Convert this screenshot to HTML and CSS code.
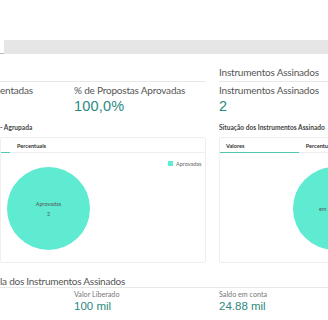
FILE: index.html
```html
<!DOCTYPE html>
<html>
<head>
<meta charset="utf-8">
<link rel="stylesheet" href="styles.css">
</head>
<body>
<div class="top"></div>
<div class="searchrow"><div class="stub"></div><div class="search"></div></div>
<div class="grid">
  <div class="col">
    <div class="sheethead"></div>
    <div class="kpis">
      <div class="kpi k1"><div class="klabel">entadas</div></div>
      <div class="kpi"><div class="klabel">% de Propostas Aprovadas</div><div class="kval">100,0%</div></div>
    </div>
    <div class="ctitle">- Agrupada</div>
    <div class="card">
      <div class="tabs">
        <div class="tab tab-left active"></div>
        <div class="tab">Percentuais</div>
      </div>
      <div class="chart">
        <div class="pie left-pie"><span>Aprovadas</span><span>2</span></div>
        <div class="legend"><i></i>Aprovadas</div>
      </div>
    </div>
  </div>
  <div class="col">
    <div class="sheethead"><span>Instrumentos Assinados</span></div>
    <div class="kpis">
      <div class="kpi"><div class="klabel">Instrumentos Assinados</div><div class="kval">2</div></div>
    </div>
    <div class="ctitle">Situação dos Instrumentos Assinado</div>
    <div class="card card-r">
      <div class="tabs">
        <div class="tab tab-v active">Valores</div>
        <div class="tab">Percentu</div>
      </div>
      <div class="chart chart-r">
        <div class="pie right-pie"><span>em</span></div>
      </div>
    </div>
  </div>
</div>
<div class="bottom">
  <div class="bhead">la dos Instrumentos Assinados</div>
  <div class="bkpis">
    <div class="bk b0"></div>
    <div class="bk b1"><div class="blabel">Valor Liberado</div><div class="bval">100 mil</div></div>
    <div class="bk b2"><div class="blabel">Saldo em conta</div><div class="bval">24.88 mil</div></div>
  </div>
</div>
</body>
</html>
```
FILE: styles.css
```css
html, body { margin: 0; padding: 0; }
body {
  width: 328px; height: 320px; overflow: hidden; background: #fff;
  font-family: Lato, "Liberation Sans", sans-serif; color: #555;
}
.top { height: 40px; }
.searchrow { display: flex; height: 14px; }
.stub { width: 4px; border-bottom: 1px solid #bbb; box-sizing: border-box; }
.search { flex: 1; background: #e6e6e6; }
.grid { display: grid; grid-template-columns: 206px 109px; column-gap: 13px; }
.col { display: flex; flex-direction: column; min-width: 0; }
.sheethead {
  height: 15px; padding-top: 12px; border-bottom: 1px solid #e8e8e8;
  font-size: 10px; letter-spacing: -0.2px; line-height: 13px; white-space: nowrap;
}
.kpis { display: flex; height: 39px; }
.kpi { width: 74px; }
.kpi + .kpi { width: auto; }
.klabel { font-size: 10px; letter-spacing: -0.2px; line-height: 16px; white-space: nowrap; }
.kval {
  font-family: "Liberation Sans", sans-serif; font-size: 14.5px;
  color: #2b8a80; line-height: 17px; letter-spacing: 0.2px;
}
.ctitle { font-size: 6.6px; font-weight: 700; color: #444; height: 14px; line-height: 8px; padding-top: 2px; white-space: nowrap; }
.card {
  height: 124px; border: 1px solid #efefef; border-radius: 2px; display: flex; flex-direction: column;
}
.card-r { border-right: none; border-radius: 2px 0 0 2px; }
.tabs { display: flex; height: 14px; border-bottom: 1px solid #eeeeee; }
.tab { font-size: 5.6px; font-weight: 700; color: #333; padding: 4px 0 0 7px; white-space: nowrap; }
.tab-left { width: 9px; padding: 0; border-bottom: 1px solid #52c7b4; margin-bottom: -1px; }
.tab-v { width: 73px; border-bottom: 1px solid #52c7b4; margin-bottom: -1px; padding-left: 6px; }
.chart { flex: 1; display: flex; overflow: hidden; }
.pie {
  width: 83px; height: 83px; border-radius: 50%; background: #5eebd2; flex: none;
  display: flex; flex-direction: column; align-items: center; justify-content: center;
  font-size: 5.5px; color: #555; gap: 4px;
}
.left-pie { margin: 14px 0 0 6px; }
.right-pie { margin: 14px 0 0 73px; align-items: flex-start; padding-left: 26px; box-sizing: border-box; }
.legend { margin: 8px 0 0 78px; font-size: 5.5px; color: #666; display: flex; align-items: flex-start; height: 8px; white-space: nowrap; }
.legend i { width: 5px; height: 5px; background: #5eebd2; margin-right: 3px; }
.bottom { margin-top: 10px; }
.bhead { font-size: 10px; letter-spacing: -0.25px; height: 13px; padding-top: 1px; line-height: 14px; border-bottom: 1px solid #e8e8e8; white-space: nowrap; }
.bkpis { display: flex; padding-top: 2px; }
.bk { width: 74px; }
.b1 { width: 145px; }
.blabel { font-size: 7.2px; color: #777; line-height: 10px; white-space: nowrap; }
.bval { font-family: "Liberation Sans", sans-serif; font-size: 11.5px; color: #2b8a80; line-height: 12px; white-space: nowrap; }
```
